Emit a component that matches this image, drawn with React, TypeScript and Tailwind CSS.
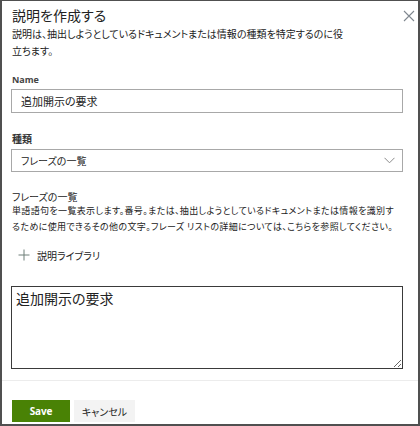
const JP_TEXT = {
  desc1: '説明は、抽出しようとしているドキュメントまたは情報の種類を特定するのに役',
  desc2: '立ちます。',
  para1: '単語語句を一覧表示します。番号。または、抽出しようとしているドキュメントまたは情報を識別す',
  para2: 'るために使用できるその他の文字。フレーズ リストの詳細については、こちらを参照してください。',
}

export default function App() {
  return (
    <div className="w-[420px] h-[426px] bg-white border-x-2 border-t border-b-2 border-[#505050] flex flex-col text-[#333] font-['Noto_Sans_CJK_JP',sans-serif] [font-feature-settings:'palt']">
      {/* header */}
      <div className="flex justify-between items-start pl-[10px] pr-[2px] pt-[4px]">
        <h1 className="text-[14px] leading-[20px] font-normal text-[#222]">説明を作成する</h1>
        <svg width="12" height="12" viewBox="0 0 12 12" className="mt-[5px] mr-[1px]">
          <path d="M1 1 L11 11 M11 1 L1 11" stroke="#808890" strokeWidth="1.1" fill="none" />
        </svg>
      </div>

      <div className="pl-[9px] pr-[15px] flex flex-col">
        <p className="pl-[1px] text-[10px] leading-[17px] text-[#222] whitespace-nowrap">
          {JP_TEXT.desc1}
          <br />
          {JP_TEXT.desc2}
        </p>

        {/* Name */}
        <label className="mt-[13px] pl-[1px] text-[9px] leading-[16px] font-bold text-[#444] font-['Open_Sans',sans-serif]">Name</label>
        <div className="mt-[1px] h-[24px] border border-[#a8a8a8] flex items-center pl-[9px] text-[11px] text-[#222]">
          追加開示の要求
        </div>

        {/* 種類 */}
        <label className="mt-[18px] pl-[1px] text-[10px] leading-[16px] font-bold text-[#333]">種類</label>
        <div className="mt-[2px] h-[23px] border border-[#a8a8a8] flex items-center justify-between pl-[9px] pr-[7px] text-[10px] text-[#222]">
          <span>フレーズの一覧</span>
          <svg width="11" height="7" viewBox="0 0 11 7">
            <path d="M0.5 0.8 L5.5 5.8 L10.5 0.8" stroke="#8a8a8a" strokeWidth="1" fill="none" />
          </svg>
        </div>

        {/* Phrase list */}
        <div className="mt-[19px] pl-[1px] text-[10px] leading-[12px] text-[#222]">フレーズの一覧</div>
        <p className="pl-[1px] text-[9px] leading-[16px] tracking-[0.35px] text-[#222] whitespace-nowrap">
          {JP_TEXT.para1}
          <br />
          {JP_TEXT.para2}
        </p>

        <div className="mt-[10px] h-[20px] flex items-center pl-[7px] gap-[7px] text-[10px] text-[#222]">
          <svg width="12" height="12" viewBox="0 0 12 12">
            <path d="M6 0.5 V11.5 M0.5 6 H11.5" stroke="#6f7f78" strokeWidth="1" fill="none" />
          </svg>
          <span>説明ライブラリ</span>
        </div>

        <textarea
          defaultValue="追加開示の要求"
          className="mt-[21px] block w-[392px] h-[83px] border border-[#3a3a3a] px-[4px] pt-[1px] text-[14px] leading-[20px] text-[#222] outline-none"
        />
      </div>

      <div className="mt-[11px] h-px bg-[#ececec]" />

      <div className="mt-[19px] pl-[10px] flex gap-[4px]">
        <button className="w-[58px] h-[22px] bg-[#498205] text-white text-[10px] font-bold font-['Open_Sans',sans-serif] tracking-[-0.2px]">
          Save
        </button>
        <button className="w-[61px] h-[22px] bg-[#f3f3f3] text-[#222] text-[10px]">キャンセル</button>
      </div>
    </div>
  )
}
